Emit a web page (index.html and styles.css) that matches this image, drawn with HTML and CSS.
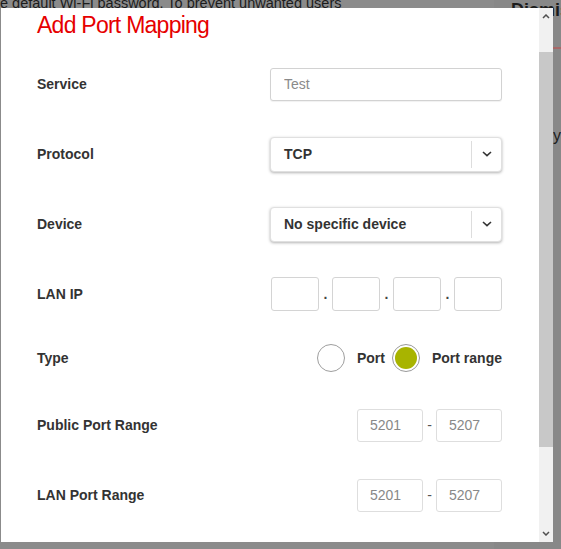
FILE: index.html
```html
<!DOCTYPE html>
<html lang="en">
<head>
<meta charset="utf-8">
<title>Add Port Mapping</title>
<link rel="stylesheet" href="styles.css">
</head>
<body>
<div class="page">
  <div class="main">
    <p class="bg-text">e default Wi-Fi password. To prevent unwanted users</p>
  </div>
  <div class="aside">
    <h3 class="aside-title">Dismiss</h3>
    <div class="aside-rule"></div>
    <p class="aside-text">you</p>
  </div>
</div>

<div class="modal">
  <div class="content">
    <h2 class="title">Add Port Mapping</h2>
    <div class="form">
      <div class="row">
        <span class="label">Service</span>
        <input class="field" type="text" placeholder="Test">
      </div>
      <div class="row">
        <span class="label">Protocol</span>
        <div class="select">
          <span class="select-value">TCP</span>
          <span class="select-arrow"><svg width="10" height="6" viewBox="0 0 10 6"><path d="M1 1l4 3.6L9 1" fill="none" stroke="#333" stroke-width="1.6"/></svg></span>
        </div>
      </div>
      <div class="row">
        <span class="label">Device</span>
        <div class="select">
          <span class="select-value">No specific device</span>
          <span class="select-arrow"><svg width="10" height="6" viewBox="0 0 10 6"><path d="M1 1l4 3.6L9 1" fill="none" stroke="#333" stroke-width="1.6"/></svg></span>
        </div>
      </div>
      <div class="row">
        <span class="label">LAN IP</span>
        <div class="ip">
          <input class="ip-box" type="text">
          <span class="ip-dot">.</span>
          <input class="ip-box" type="text">
          <span class="ip-dot">.</span>
          <input class="ip-box" type="text">
          <span class="ip-dot">.</span>
          <input class="ip-box" type="text">
        </div>
      </div>
      <div class="row row-type">
        <span class="label">Type</span>
        <div class="radios">
          <label class="radio-option"><span class="radio"></span><span class="radio-label">Port</span></label>
          <label class="radio-option"><span class="radio radio-checked"></span><span class="radio-label">Port range</span></label>
        </div>
      </div>
      <div class="row">
        <span class="label">Public Port Range</span>
        <div class="range">
          <input class="port-box" type="text" value="5201">
          <span class="range-dash">-</span>
          <input class="port-box" type="text" value="5207">
        </div>
      </div>
      <div class="row">
        <span class="label">LAN Port Range</span>
        <div class="range">
          <input class="port-box" type="text" value="5201">
          <span class="range-dash">-</span>
          <input class="port-box" type="text" value="5207">
        </div>
      </div>
    </div>
  </div>
  <div class="scrollbar">
    <div class="sb-btn"><svg width="8" height="5" viewBox="0 0 8 5"><path d="M1 4l3-3 3 3" fill="none" stroke="#505050" stroke-width="1.5"/></svg></div>
    <div class="sb-track"><div class="sb-thumb"></div></div>
    <div class="sb-btn"><svg width="8" height="5" viewBox="0 0 8 5"><path d="M1 1l3 3 3-3" fill="none" stroke="#505050" stroke-width="1.5"/></svg></div>
  </div>
</div>
</body>
</html>
```

FILE: styles.css
```css
html, body {
  margin: 0;
  padding: 0;
}

body {
  width: 561px;
  height: 549px;
  overflow: hidden;
  background: #808080;
  font-family: "Liberation Sans", Arial, sans-serif;
  position: relative;
}

.page {
  display: flex;
  height: 549px;
}

.main {
  width: 494px;
  background: #8b8b8b;
}

.bg-text {
  margin: -6px 0 0 0;
  font-size: 14.5px;
  line-height: 18px;
  color: #1c1c1c;
  white-space: nowrap;
}

.aside {
  flex: 1;
  background: #888888;
  padding-left: 17px;
  overflow: hidden;
}

.aside-title {
  margin: -1px 0 0 0;
  font-size: 18px;
  line-height: 22px;
  font-weight: bold;
  color: #1c1c1c;
  white-space: nowrap;
}

.aside-rule {
  margin-top: 26px;
  height: 2px;
  background: #a86868;
}

.aside-text {
  margin: 78px 0 0 42px;
  font-size: 16px;
  line-height: 18px;
  color: #1c1c1c;
}

/* modal */
.modal {
  position: absolute;
  left: 1px;
  top: 8px;
  width: 552px;
  height: 534px;
  display: flex;
  background: #ffffff;
  overflow: hidden;
}

.content {
  flex: 1;
  padding: 3px 37px 0 36px;
}

.title {
  margin: 0;
  font-size: 23px;
  line-height: 28px;
  font-weight: normal;
  letter-spacing: -0.75px;
  color: #e60000;
}

.form {
  margin-top: 28px;
  display: flex;
  flex-direction: column;
  gap: 36px;
}

.row {
  height: 34px;
  display: flex;
  align-items: center;
  justify-content: space-between;
}

.row-type {
  height: 28px;
  margin-top: -3px;
}

.label {
  font-size: 14px;
  font-weight: bold;
  color: #333333;
}

.field {
  box-sizing: border-box;
  width: 232px;
  height: 33px;
  margin: 0;
  padding: 0 13px;
  border: 1px solid #d2d2d2;
  border-radius: 3px;
  box-shadow: 0 1px 1px rgba(0, 0, 0, 0.06);
  font-family: inherit;
  font-size: 14px;
  color: #888888;
  outline: none;
}

.field::placeholder {
  color: #8a8a8a;
}

.select {
  box-sizing: border-box;
  width: 232px;
  height: 35px;
  display: flex;
  align-items: center;
  border: 1px solid #e0e0e0;
  border-radius: 4px;
  box-shadow: 0 1px 3px rgba(0, 0, 0, 0.3);
  background: #fff;
}

.select-value {
  flex: 1;
  padding-left: 13px;
  font-size: 14px;
  font-weight: bold;
  color: #333333;
}

.select-arrow {
  width: 29px;
  height: 27px;
  border-left: 1px solid #dddddd;
  display: flex;
  align-items: center;
  justify-content: center;
}

.ip {
  display: flex;
  align-items: center;
}

.ip-box {
  box-sizing: border-box;
  width: 48px;
  height: 34px;
  margin: 0;
  padding: 0;
  border: 1px solid #d4d4d4;
  border-radius: 3px;
  outline: none;
}

.ip-dot {
  width: 13px;
  text-align: center;
  font-size: 14px;
  font-weight: bold;
  color: #444;
}

.radios {
  display: flex;
  align-items: center;
}

.radio-option {
  display: flex;
  align-items: center;
  gap: 12px;
}

.radio-option + .radio-option {
  margin-left: 7px;
}

.radio {
  box-sizing: border-box;
  width: 28px;
  height: 28px;
  border: 1px solid #9e9e9e;
  border-radius: 50%;
  background: #fff;
}

.radio-checked {
  padding: 2px;
  background: #a8b400;
  background-clip: content-box;
  border-color: #9a9a9a;
}

.radio-label {
  font-size: 14px;
  font-weight: bold;
  color: #333333;
}

.range {
  display: flex;
  align-items: center;
}

.port-box {
  box-sizing: border-box;
  width: 66px;
  height: 33px;
  margin: 0;
  padding: 0 0 0 12px;
  border: 1px solid #dedede;
  border-radius: 3px;
  font-family: inherit;
  font-size: 14px;
  color: #888888;
  outline: none;
}

.range-dash {
  width: 13px;
  text-align: center;
  font-size: 14px;
  color: #555;
}

/* scrollbar */
.scrollbar {
  width: 14px;
  display: flex;
  flex-direction: column;
  background: #f1f1f1;
}

.sb-btn {
  height: 17px;
  display: flex;
  align-items: center;
  justify-content: center;
}

.sb-track {
  flex: 1;
}

.sb-thumb {
  margin-top: 27px;
  height: 395px;
  background: #c8c8c8;
}
```
